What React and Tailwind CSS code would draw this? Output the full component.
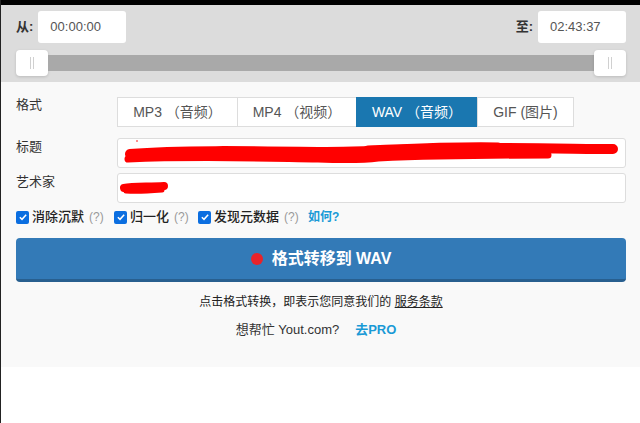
import React from 'react';

const font = { fontFamily: '"Liberation Sans", "Noto Sans CJK SC", Arial, sans-serif' };

const formats = [
  { label: 'MP3 （音频）', w: 'w-[121px]' },
  { label: 'MP4 （视频）', w: 'w-[120px]' },
  { label: 'WAV （音频）', w: 'w-[122px]', active: true },
  { label: 'GIF (图片)', w: 'w-[97px]' },
];

function Handle() {
  return (
    <div className="w-8 h-[26px] bg-white rounded-sm shadow-[0_1px_3px_rgba(0,0,0,0.15)] flex items-center justify-center gap-[2px] shrink-0">
      <div className="w-px h-3 bg-[#d0d0d0]" />
      <div className="w-px h-3 bg-[#d0d0d0]" />
    </div>
  );
}

function Check({ label }) {
  return (
    <label className="flex items-center gap-[3px] text-[13px] text-[#222]">
      <span className="w-[13px] h-[13px] rounded-[2px] bg-[#0b6ee0] flex items-center justify-center">
        <svg viewBox="0 0 12 12" className="w-[10px] h-[10px]">
          <path d="M2.2 6.3 L4.8 8.8 L9.8 3.2" fill="none" stroke="white" strokeWidth="1.8" />
        </svg>
      </span>
      <span className="font-medium">{label}</span>
      <span className="text-[#999] text-[12px] ml-[2px]">(?)</span>
    </label>
  );
}

export default function App() {
  return (
    <div style={font} className="w-[640px] h-[423px] bg-white border-l border-[#222] overflow-hidden flex flex-col">
      <div className="h-[5px] bg-black shrink-0" />

      {/* time range */}
      <div className="bg-[#dcdcdc] h-[77px] shrink-0 pl-[15px] pr-[14px] pt-[6px]">
        <div className="flex items-center justify-between h-8">
          <div className="flex items-center gap-[5px]">
            <span className="text-[13px] font-bold text-[#333]">从:</span>
            <div className="w-[88px] h-8 bg-white rounded-[3px] flex items-center pl-3 text-[13px] text-[#555]">00:00:00</div>
          </div>
          <div className="flex items-center gap-[5px]">
            <span className="text-[13px] font-bold text-[#333]">至:</span>
            <div className="w-[88px] h-8 bg-white rounded-[3px] flex items-center pl-3 text-[13px] text-[#555]">02:43:37</div>
          </div>
        </div>
        <div className="flex items-center mt-[7px]">
          <Handle />
          <div className="flex-1 h-4 bg-[#a9a9a9]" />
          <Handle />
        </div>
      </div>

      {/* form */}
      <div className="bg-[#f9f9f9] h-[285px] shrink-0 pl-[15px] pr-[14px] pt-[15px]">
        <div className="flex">
          <div className="w-[101px] text-[13px] text-[#333] -mt-[2px]">格式</div>
          <div className="flex h-[30px] bg-white">
            {formats.map((f) => (
              <div
                key={f.label}
                className={`${f.w} flex items-center justify-center text-[14px] border -ml-px first:ml-0 ${
                  f.active ? 'bg-[#1a77b0] border-[#1a77b0] text-white' : 'border-[#ddd] text-[#555]'
                }`}
              >
                {f.label}
              </div>
            ))}
          </div>
        </div>

        <div className="flex mt-[11px]">
          <div className="w-[101px] text-[13px] text-[#333] -mt-[1px]">标题</div>
          <div className="relative flex-1 h-[30px] bg-white border border-[#ddd] rounded-[3px] overflow-hidden">
            <svg className="absolute inset-0" width="508" height="30" viewBox="0 0 508 30">
              <path d="M12 15 C60 11 130 12 200 13 C260 13 300 9 360 9 C420 9 470 10 495 10" fill="none" stroke="#ff0000" strokeWidth="10" strokeLinecap="round" />
              <path d="M10 20 C80 17 140 19 200 20 C230 21 245 21 260 19 C330 16 400 16 430 16" fill="none" stroke="#ff0000" strokeWidth="7" strokeLinecap="round" />
              <path d="M250 12 C300 10 340 8 380 9" fill="none" stroke="#ff0000" strokeWidth="11" strokeLinecap="round" />
              <circle cx="19" cy="2" r="0.8" fill="#ff0000" />
            </svg>
          </div>
        </div>

        <div className="flex mt-[5px]">
          <div className="w-[101px] text-[13px] text-[#333] -mt-[1px]">艺术家</div>
          <div className="relative flex-1 h-[30px] bg-white border border-[#ddd] rounded-[3px] overflow-hidden">
            <svg className="absolute inset-0" width="508" height="30" viewBox="0 0 508 30">
              <path d="M6 14 C15 12 30 13 46 12" fill="none" stroke="#ff0000" strokeWidth="8" strokeLinecap="round" />
              <path d="M8 17 C20 18 32 17 44 16" fill="none" stroke="#ff0000" strokeWidth="5" strokeLinecap="round" />
            </svg>
          </div>
        </div>

        <div className="flex items-center mt-[7px] h-[14px]">
          <div className="w-[98px]"><Check label="消除沉默" /></div>
          <div className="w-[84px]"><Check label="归一化" /></div>
          <div className="w-[110px]"><Check label="发现元数据" /></div>
          <span className="text-[12px] font-bold text-[#1a9ad6]">如何?</span>
        </div>

        <div className="mt-[14px] h-[44px] bg-[#337ab7] border-b-[3px] border-[#285f8f] rounded-[4px] flex items-center justify-center gap-[9px]">
          <span className="w-3 h-3 rounded-full bg-[#e8232a]" />
          <span className="text-white text-[16px] font-bold">格式转移到 WAV</span>
        </div>

        <div className="text-center text-[12px] text-[#222] mt-[11px]">
          点击格式转换，即表示您同意我们的 <span className="underline">服务条款</span>
        </div>
        <div className="flex justify-center items-center gap-[16px] mt-[9px] text-[13px] pr-[10px]">
          <span className="text-[#333]">想帮忙 Yout.com?</span>
          <span className="font-bold text-[#1a9ad6]">去PRO</span>
        </div>
      </div>
    </div>
  );
}
